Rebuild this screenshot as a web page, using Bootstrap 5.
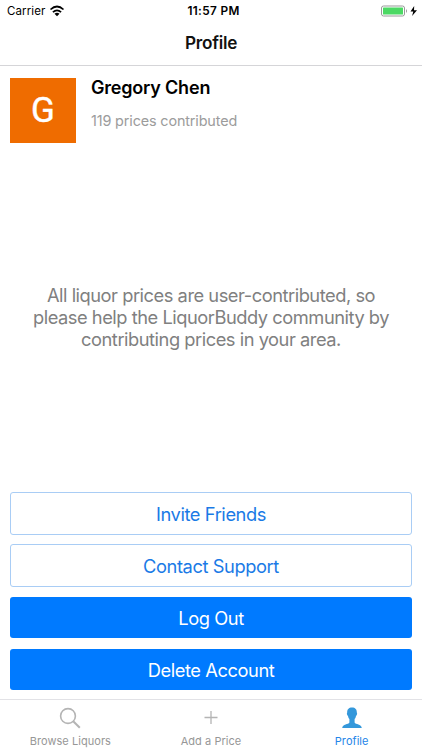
<!DOCTYPE html>
<html lang="en">
<head>
<meta charset="utf-8">
<meta name="viewport" content="width=device-width, initial-scale=1">
<title>Profile</title>
<link href="https://cdn.jsdelivr.net/npm/bootstrap@5.3.0/dist/css/bootstrap.min.css" rel="stylesheet">
<style>
body{font-family:Inter,"Liberation Sans",sans-serif;background:#fff;color:#000}
.screen{height:750px;overflow:hidden}
.statusbar{height:22px;font-size:11.5px;line-height:22px;padding:0 4px 0 7px}
.carrier{letter-spacing:.1px}
.clock{font-size:11.8px;font-weight:600;letter-spacing:.35px;padding-left:2px}
.titlebar{height:44px;border-bottom:1px solid #d5d5d8}
.titlebar h1{font-size:17.2px;font-weight:600;line-height:42px;letter-spacing:-.25px;color:#111}
.person{padding:12px 11px 0 10px;height:78px}
.avatar{width:66px;height:65px;background:#ef6c00;color:#fff;font:400 35px/66px Roboto,sans-serif;-webkit-text-stroke:.4px #fff}
.person-info{padding-left:15px}
.person-name{font-size:18px;font-weight:600;line-height:20px;letter-spacing:-.2px}
.person-count{font-size:14.4px;line-height:18px;margin-top:14px;letter-spacing:-.14px;color:#9c9c9c}
.note{font-size:18.3px;line-height:21.9px;letter-spacing:-.47px;color:#808080}
.actions{padding:0 10px 9px 10px;gap:9px}
.btn-app{height:41px;padding:1px 0 0;border-radius:3px;font-size:18.3px;line-height:41px;letter-spacing:-.42px}
.btn-line{height:43px;color:#1a7ae6;border:1px solid #a9cdf5;background:#fff}
.btn-fill{color:#fff;background:#007aff;border:0;margin-top:1px}
.btn-fill + .btn-fill{margin-top:2px}
.tabs{height:51px;border-top:1px solid #e2e2e6;background:#fff}
.tabs a{color:#979797;font-size:11px;line-height:14px;padding-top:7px;text-decoration:none}
.tabs a span{margin-top:5px;letter-spacing:.05px}
.tabs a.current{color:#2585e8}
</style>
</head>
<body>
<div class="screen d-flex flex-column">
  <header>
    <div class="statusbar row g-0">
      <div class="col d-flex align-items-center"><span class="carrier">Carrier</span>
        <svg class="ms-1" width="16" height="12" viewBox="0 0 16 12"><g fill="none" stroke="#000" stroke-width="1.7"><path d="M1.500 4.500Q8-1.500 14.500 4.500"/><path d="M3.900 7.100Q8 3.500 12.100 7.100"/></g><path d="M5.500 8.700Q8 6.900 10.500 8.700L8 11.200Z"/></svg>
      </div>
      <div class="col-auto clock">11:57 PM</div>
      <div class="col d-flex align-items-center justify-content-end">
        <svg width="38" height="13" viewBox="0 0 38 13"><rect x="1.500" y="1" width="23" height="10" rx="2" fill="#fff" stroke="#999"/><rect x="3" y="2.500" width="20" height="7" rx=".6" fill="#4cd964"/><path d="M26 4Q28 6 26 8Z" fill="#999"/><path d="M34.200 1L30.500 6.500h2.800l-1.200 4.500L37 5.200h-3Z"/></svg>
      </div>
    </div>
    <div class="titlebar text-center"><h1 class="m-0">Profile</h1></div>
  </header>
  <section class="person d-flex">
    <div class="avatar text-center flex-shrink-0">G</div>
    <div class="person-info"><div class="person-name">Gregory Chen</div><div class="person-count">119 prices contributed</div></div>
  </section>
  <main class="flex-grow-1 d-flex align-items-center justify-content-center text-center">
    <p class="note mb-0">All liquor prices are user-contributed, so<br>please help the LiquorBuddy community by<br>contributing prices in your area.</p>
  </main>
  <div class="actions d-flex flex-column">
    <button type="button" class="btn btn-app btn-line w-100">Invite Friends</button>
    <button type="button" class="btn btn-app btn-line w-100">Contact Support</button>
    <button type="button" class="btn btn-app btn-fill w-100">Log Out</button>
    <button type="button" class="btn btn-app btn-fill w-100">Delete Account</button>
  </div>
  <nav class="tabs row g-0 text-center">
    <a href="#" class="col d-flex flex-column align-items-center"><svg width="22" height="22" viewBox="0 0 22 22" fill="none" stroke="#b4b4b4" stroke-width="1.600"><circle cx="9" cy="9" r="7.400"/><path d="M14.200 14.200L20.800 20.800" stroke-width="2"/></svg><span>Browse Liquors</span></a>
    <a href="#" class="col d-flex flex-column align-items-center"><svg width="22" height="22" viewBox="0 0 22 22" fill="none" stroke="#b4b4b4" stroke-width="1.300"><path d="M4.500 10.500H17.500M11 4V17"/></svg><span>Add a Price</span></a>
    <a href="#" class="col d-flex flex-column align-items-center current"><svg width="22" height="22" viewBox="0 0 22 22" fill="#3498db"><path d="M11 .5C7.800.5 6 2.500 6.200 5.500C5.500 6 6 8.500 7 9C7.300 10.500 7.800 11.500 8.400 12V15.500C7.500 17.500 1.500 17 1.200 21H20.800C20.500 17 14.500 17.500 13.600 15.500V12C14.200 11.500 14.700 10.500 15 9C16 8.500 16.500 6 15.800 5.500C16 2.500 14.200.5 11 .5Z"/></svg><span>Profile</span></a>
  </nav>
</div>
<script src="https://cdn.jsdelivr.net/npm/bootstrap@5.3.0/dist/js/bootstrap.bundle.min.js"></script>
</body>
</html>
